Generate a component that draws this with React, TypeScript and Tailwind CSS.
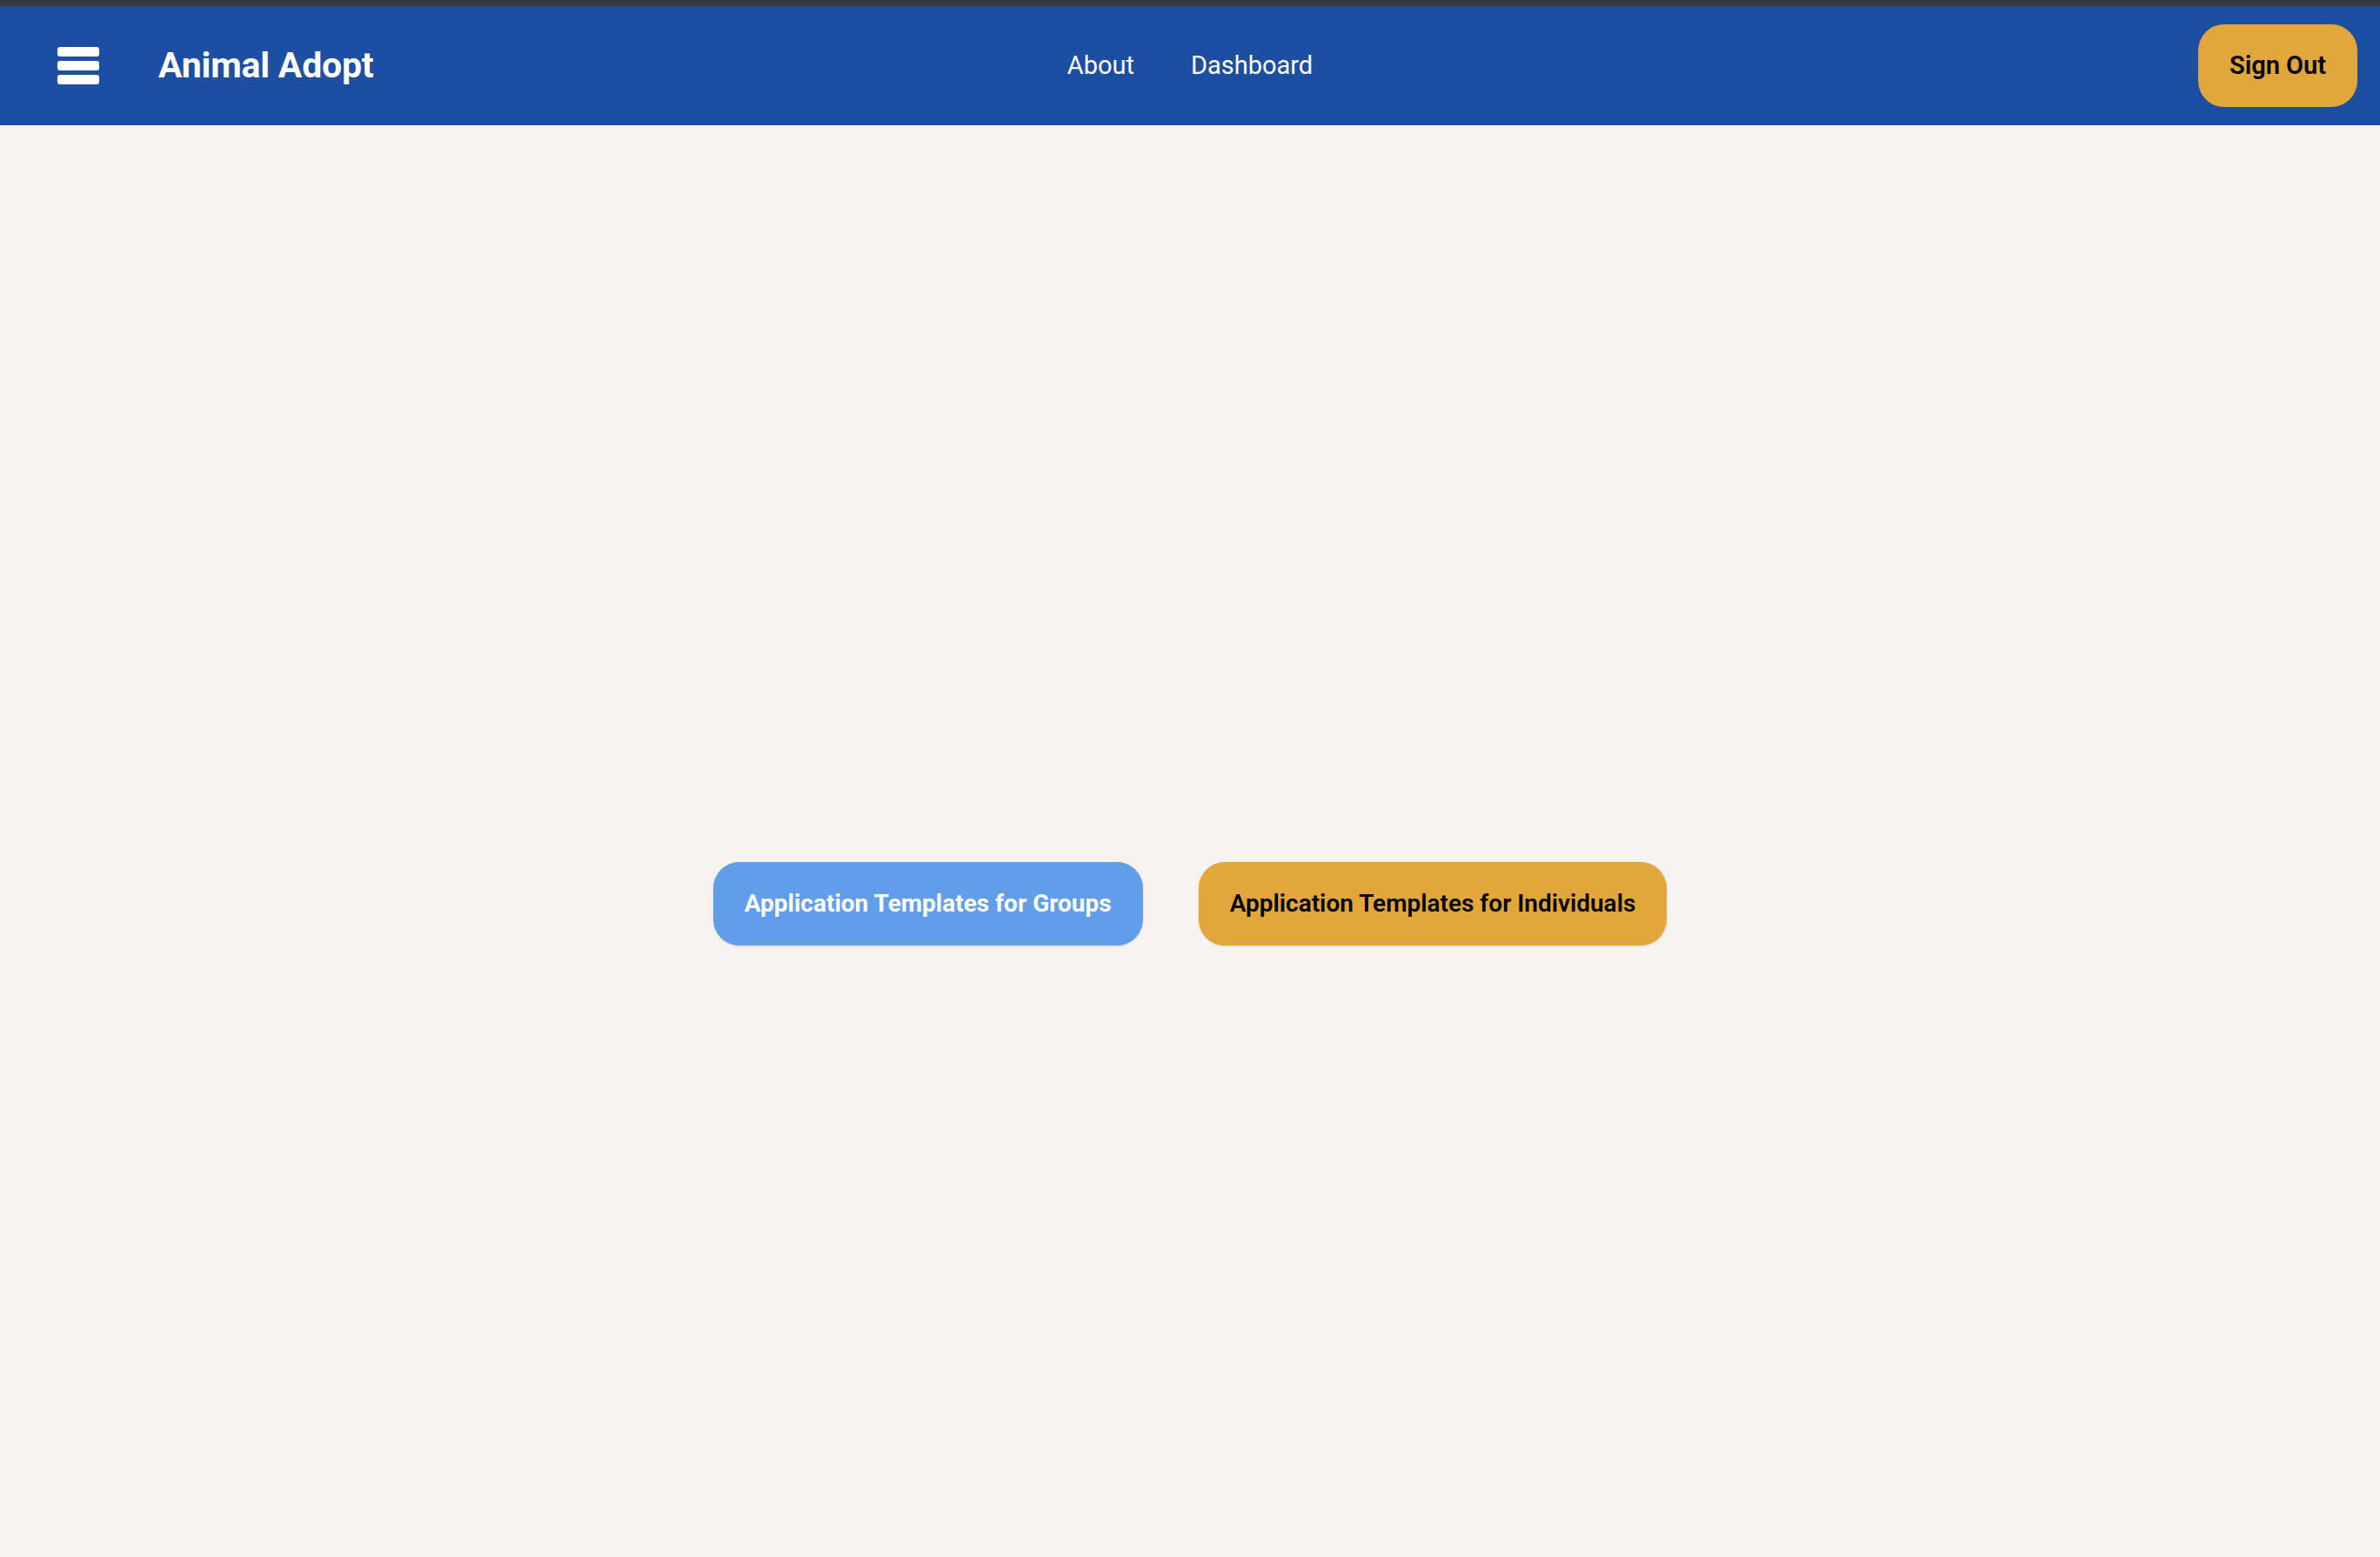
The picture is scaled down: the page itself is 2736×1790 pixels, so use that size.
const font = { fontFamily: 'Roboto, "Noto Sans", sans-serif' }

const MenuIcon = () => (
    <div className="flex w-[48px] flex-col gap-[5px]">
        <span className="h-[11px] w-full rounded-[3px] bg-white" />
        <span className="h-[11px] w-full rounded-[3px] bg-white" />
        <span className="h-[11px] w-full rounded-[3px] bg-white" />
    </div>
)

const App = () => {
    return (
        <div className="min-h-screen bg-[#f7f4f0]" style={font}>
            {/* window top edge */}
            <div className="h-[7px] bg-[#3b3b3b]" />

            {/* navbar */}
            <header className="grid h-[137px] grid-cols-[1fr_auto_1fr] items-center bg-[#1c4ea1] pl-[26px] pr-[26px]">
                <div className="flex items-center gap-[68px] pl-[40px]">
                    <MenuIcon />
                    <h1 className="text-[41px] font-bold leading-none tracking-[-0.2px] text-white">Animal Adopt</h1>
                </div>
                <nav className="flex items-center gap-[65px] text-[29px] text-white">
                    <a>About</a>
                    <a>Dashboard</a>
                </nav>
                <div className="flex justify-end">
                    <button className="h-[95px] w-[183px] rounded-[30px] bg-[#e2a63a] text-[29px] font-semibold text-black">
                        Sign Out
                    </button>
                </div>
            </header>

            {/* main */}
            <main className="flex h-[1790px] items-center justify-center gap-[64px]">
                <button className="h-[96px] rounded-[30px] bg-[#619eea] px-[36px] text-[28px] font-bold text-white shadow-sm">
                    Application Templates for Groups
                </button>
                <button className="h-[96px] rounded-[30px] bg-[#e2a63a] px-[36px] text-[28px] font-semibold text-black shadow-sm">
                    Application Templates for Individuals
                </button>
            </main>
        </div>
    )
}

export default App
